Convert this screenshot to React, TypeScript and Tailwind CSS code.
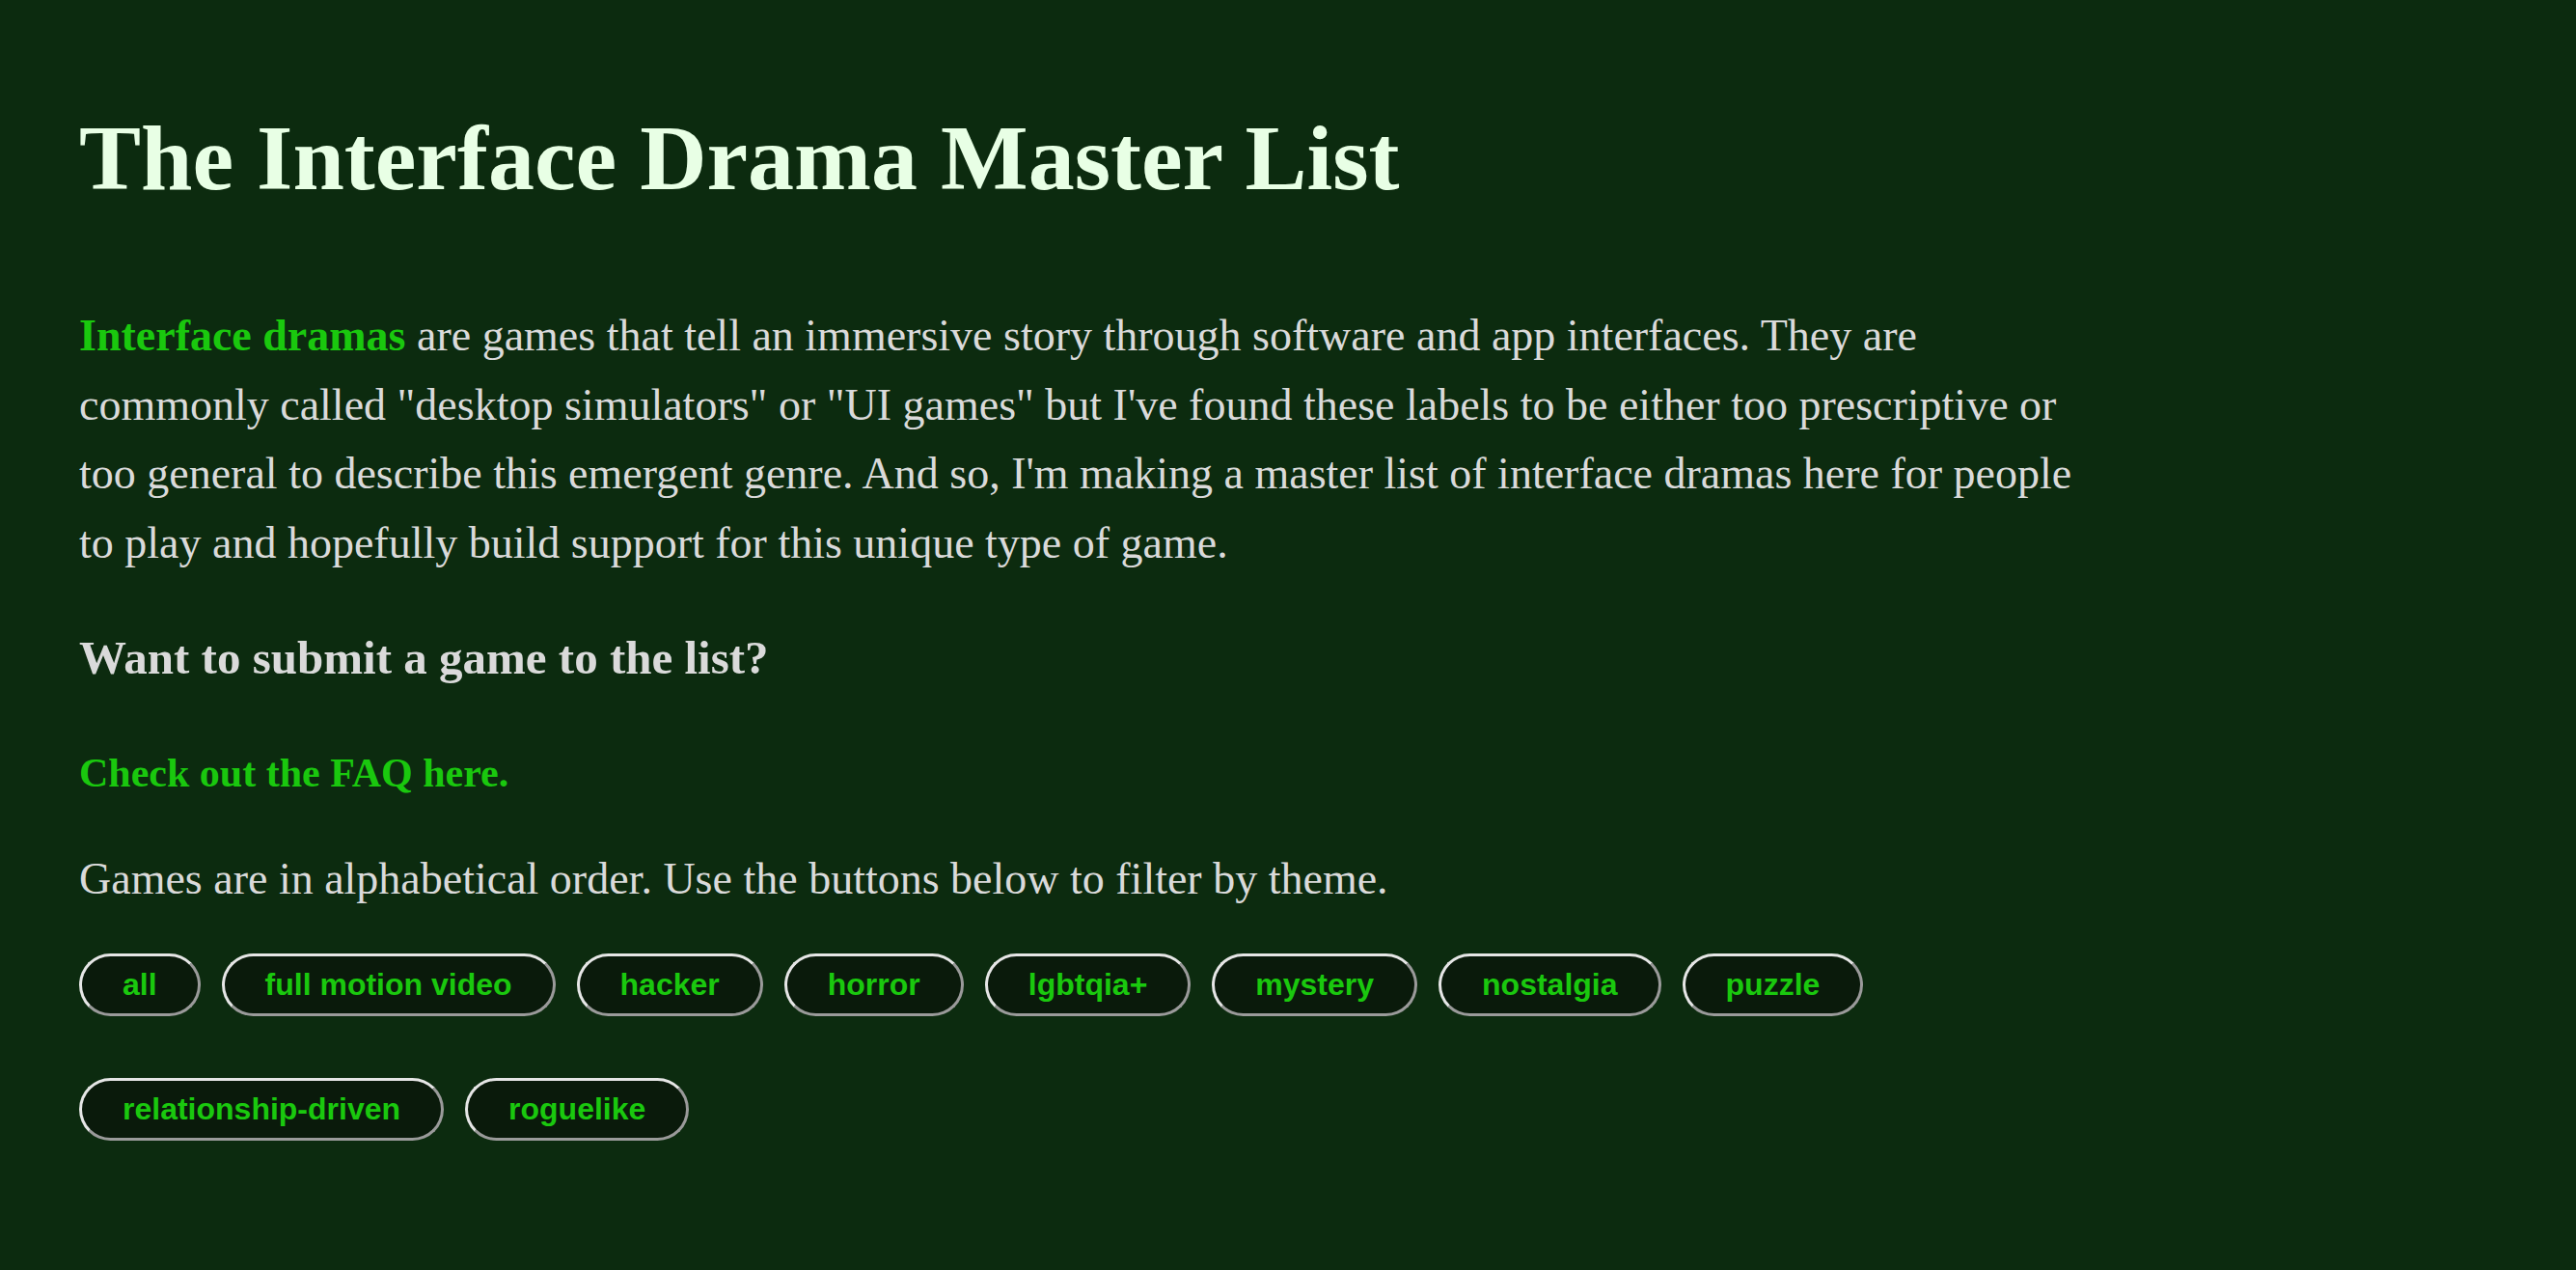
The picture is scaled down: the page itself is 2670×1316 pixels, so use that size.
import React from "react";

const themes = [
  "all",
  "full motion video",
  "hacker",
  "horror",
  "lgbtqia+",
  "mystery",
  "nostalgia",
  "puzzle",
  "relationship-driven",
  "roguelike",
];

function ThemeButton(props: { label: string }) {
  return (
    <button className="h-[65px] flex items-center px-[42px] rounded-full border-[3px] border-t-[#e6e6e6] border-l-[#e6e6e6] border-r-[#9a9a9a] border-b-[#9a9a9a] bg-[#0a1a0b] text-[32px] font-bold text-[#1ac80e] font-['Liberation_Sans',Arial,sans-serif] leading-none">
      {props.label}
    </button>
  );
}

export default function App() {
  return (
    <div className="min-h-screen w-full bg-[#0c2b0f] px-[82px] pt-[116px] pb-[60px] font-['Liberation_Serif','Times_New_Roman',serif]">
      <h1 className="text-[96px] leading-[96px] font-bold text-[#e8ffe5]">
        The Interface Drama Master List
      </h1>

      <p className="mt-[100px] text-[46px] leading-[71.5px] text-[#dadada]">
        <a className="font-bold text-[#1ac80e]">Interface dramas</a> are games
        that tell an immersive story through software and app interfaces. They
        are
        <br />
        commonly called "desktop simulators" or "UI games" but I've found these
        labels to be either too prescriptive or
        <br />
        too general to describe this emergent genre. And so, I'm making a
        master list of interface dramas here for people
        <br />
        to play and hopefully build support for this unique type of game.
      </p>

      <h3 className="mt-[54px] text-[49px] leading-[60px] font-bold text-[#dadada]">
        Want to submit a game to the list?
      </h3>

      <p className="mt-[59px] text-[42px] leading-[60px] font-bold">
        <a className="text-[#1ac80e]">Check out the FAQ here.</a>
      </p>

      <p className="mt-[44px] text-[46px] leading-[71.5px] text-[#dadada]">
        Games are in alphabetical order. Use the buttons below to filter by
        theme.
      </p>

      <div className="mt-[41px] flex flex-wrap gap-x-[22px] gap-y-[64px] max-w-[1900px]">
        {themes.map((t) => (
          <ThemeButton key={t} label={t} />
        ))}
      </div>
    </div>
  );
}
